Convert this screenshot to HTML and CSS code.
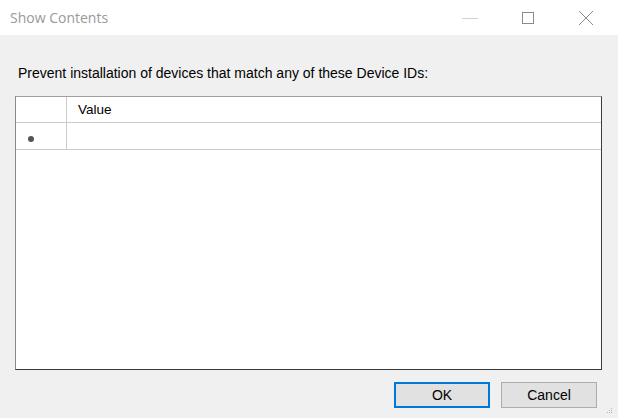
FILE: index.html
```html
<!DOCTYPE html>
<html>
<head>
<meta charset="utf-8">
<link rel="stylesheet" href="styles.css">
</head>
<body>
<div class="window">
  <div class="titlebar">
    <div class="title">Show Contents</div>
    <div class="controls">
      <div class="ctl"><svg width="16" height="16" viewBox="0 0 16 16"><line x1="0" y1="8.5" x2="16" y2="8.5" stroke="#d0d0d0" stroke-width="1"/></svg></div>
      <div class="ctl"><svg width="14" height="14" viewBox="0 0 14 14"><rect x="1.5" y="1.5" width="11" height="11" fill="none" stroke="#8a8a8a" stroke-width="1"/></svg></div>
      <div class="ctl"><svg width="16" height="16" viewBox="0 0 16 16"><path d="M1 1 L15 15 M15 1 L1 15" stroke="#8a8a8a" stroke-width="1" fill="none"/></svg></div>
    </div>
  </div>
  <div class="content">
    <div class="label">Prevent installation of devices that match any of these Device IDs:</div>
    <div class="grid">
      <div class="row header">
        <div class="rowhead"></div>
        <div class="cell">Value</div>
      </div>
      <div class="row">
        <div class="rowhead"><span class="dot"></span></div>
        <div class="cell"></div>
      </div>
    </div>
    <div class="buttons">
      <div class="btn primary">OK</div>
      <div class="btn">Cancel</div>
    </div>
  </div>
  <div class="grip">
    <svg width="6" height="6" viewBox="0 0 6 6"><rect x="4" y="0" width="1" height="1" fill="#b5b5b5"/><rect x="2" y="2" width="1" height="1" fill="#b5b5b5"/><rect x="4" y="2" width="1" height="1" fill="#b5b5b5"/><rect x="0" y="4" width="1" height="1" fill="#b5b5b5"/><rect x="2" y="4" width="1" height="1" fill="#b5b5b5"/><rect x="4" y="4" width="1" height="1" fill="#b5b5b5"/></svg>
  </div>
</div>
</body>
</html>
```
FILE: styles.css
```css
html, body {
  margin: 0;
  padding: 0;
}
body {
  width: 618px;
  height: 418px;
  overflow: hidden;
  background: #f0f0f0;
  font-family: "Liberation Sans", Arial, sans-serif;
}
.window {
  position: relative;
  width: 618px;
  height: 418px;
  display: flex;
  flex-direction: column;
}
.titlebar {
  height: 35px;
  background: #ffffff;
  display: flex;
  align-items: center;
  justify-content: space-between;
  flex-shrink: 0;
}
.title {
  padding-left: 10px;
  font-family: "Open Sans", "Noto Sans", sans-serif;
  font-size: 14px;
  color: #999999;
  margin-top: -1px;
}
.controls {
  display: flex;
  padding-right: 3px;
  height: 35px;
}
.ctl {
  width: 58px;
  height: 35px;
  display: flex;
  align-items: center;
  justify-content: center;
}
.ctl svg {
  display: block;
}
.content {
  padding: 30px 21px 0 15px;
  display: flex;
  flex-direction: column;
}
.label {
  font-size: 14px;
  line-height: 16px;
  color: #000;
  padding-left: 3px;
}
.grid {
  margin-top: 15px;
  width: 587px;
  height: 274px;
  box-sizing: border-box;
  background: #ffffff;
  border: 1px solid;
  border-color: #a0a0a0 #3c3c3c #3c3c3c #8a8a8a;
}
.row {
  display: flex;
  height: 27px;
  border-bottom: 1px solid #cccccc;
  box-sizing: border-box;
}
.header {
  height: 26px;
}
.rowhead {
  width: 51px;
  flex-shrink: 0;
  border-right: 1px solid #cccccc;
  box-sizing: border-box;
  display: flex;
  align-items: center;
  padding-left: 12px;
}
.cell {
  flex: 1;
  font-size: 13.5px;
  display: flex;
  align-items: center;
  padding-left: 11px;
}
.dot {
  width: 6px;
  height: 6px;
  border-radius: 50%;
  background: #555555;
  display: block;
  margin-top: 5px;
}
.buttons {
  display: flex;
  justify-content: flex-end;
  gap: 11px;
  margin-top: 12px;
}
.btn {
  width: 96px;
  height: 26px;
  box-sizing: border-box;
  background: #e1e1e1;
  border: 1px solid #adadad;
  font-size: 14px;
  display: flex;
  align-items: center;
  justify-content: center;
  color: #000;
}
.btn.primary {
  border: 2px solid #0078d7;
}
.grip {
  position: absolute;
  right: 5px;
  bottom: 4px;
  line-height: 0;
}
```
